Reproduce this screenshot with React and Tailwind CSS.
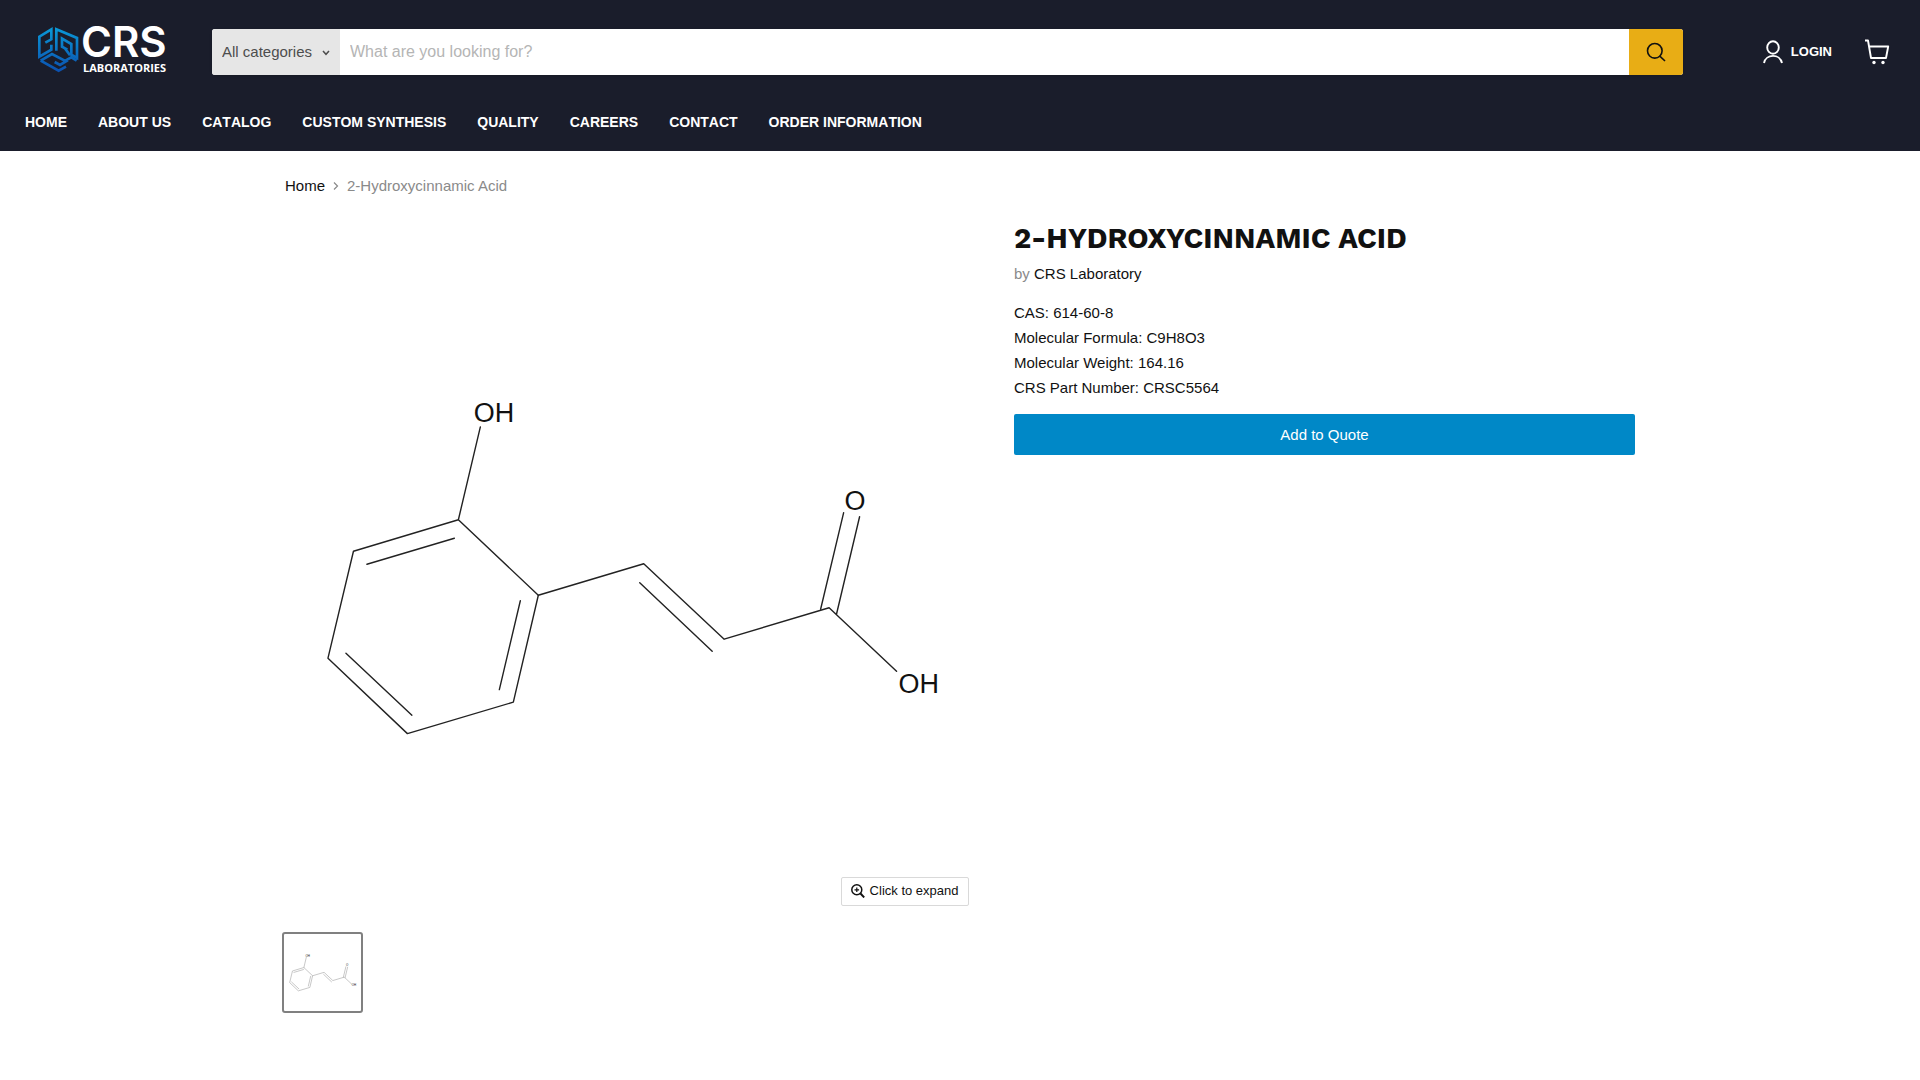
import React from "react";

const NAV = ["HOME", "ABOUT US", "CATALOG", "CUSTOM SYNTHESIS", "QUALITY", "CAREERS", "CONTACT", "ORDER INFORMATION"];

const DETAILS = [
  "CAS: 614-60-8",
  "Molecular Formula: C9H8O3",
  "Molecular Weight: 164.16",
  "CRS Part Number: CRSC5564",
];

function Logo() {
  return (
    <svg viewBox="0 0 140 60" className="h-[60px] w-[140px] overflow-visible" role="img" aria-label="CRS Laboratories">
      <defs>
        <linearGradient id="cube" x1="0" y1="15" x2="0" y2="150" gradientUnits="userSpaceOnUse">
          <stop offset="0" stopColor="#0a9ad8" />
          <stop offset="1" stopColor="#0b4fae" />
        </linearGradient>
      </defs>
      <g transform="translate(-1 0) scale(0.3333)" fill="none" stroke="url(#cube)" strokeWidth="8">
        <path d="M34 62L52 52V22L16 44V104L52 83V68" />
        <path d="M67 86V22L129 48V108L112 98V66L84 50V74L100 83M92 78L108 100" />
        <path d="M20 116L54 96L96 118L78 129L62 120M20 116L74 146L96 134M128 116L112 106L94 116" />
      </g>
      <text x="46" y="35" fill="#fff" fontFamily="Inter" fontWeight="600" fontSize="42">CRS</text>
      <text x="48" y="50" fill="#fff" fontFamily="Open Sans" fontWeight="700" fontSize="11">LABORATORIES</text>
    </svg>
  );
}

function Molecule({ className, strokeWidth = 1.4, stroke = "#222" }) {
  return (
    <svg viewBox="285 221 689 689" className={className} role="img" aria-label="2-Hydroxycinnamic Acid structure">
      <g fill="none" stroke={stroke} strokeWidth={strokeWidth} strokeLinecap="round" strokeLinejoin="round">
        <path d="M480.500 427L458.500 520L538.500 595.500L513.500 702.500L407.500 734L328 658.500L353.500 551.500L458.500 520" />
        <path d="M367 564.500L454.500 538.500M520.500 601L499.500 690M346 653.500L412 715.500" />
        <path d="M538.500 595.500L644 564L724.500 639.500L829.500 608L897 671.500M640 583L712.500 651.500" />
        <path d="M844 513L821 609.500M860 517L837 614" />
      </g>
      <g fill="#111" fontFamily="Liberation Sans" fontSize="27">
        <text x="474" y="422">OH</text>
        <text x="845" y="510">O</text>
        <text x="899" y="693">OH</text>
      </g>
    </svg>
  );
}

export default function App() {
  return (
    <div className="min-h-screen bg-white font-['Liberation_Sans',Arial,sans-serif] text-[15px] text-[#111]">
      <header className="bg-[#1a1d2b] pb-2 text-white">
        <div className="flex items-center pt-[22px] pr-[30px] pl-[35px]">
          <a href="#" className="mr-[37px] block">
            <Logo />
          </a>
          <form className="flex h-[46px] flex-1 overflow-hidden rounded-[3px] bg-white shadow" onSubmit={(e) => e.preventDefault()}>
            <div className="relative w-[128px] bg-[#e6e6e6] text-[#4d4d4d]">
              <select aria-label="Category" className="h-full w-full appearance-none pl-[10px]">
                <option>All categories</option>
              </select>
              <svg viewBox="0 0 8 6" className="pointer-events-none absolute top-[21px] right-[10px] h-[6px] w-2" fill="none" stroke="#4d4d4d" strokeWidth="1.500">
                <path d="M1 1L4 4.300L7 1" />
              </svg>
            </div>
            <input aria-label="Search" placeholder="What are you looking for?" className="min-w-0 flex-1 px-[10px] text-base text-[#111] outline-none placeholder:text-[#b5b5b5]" />
            <button aria-label="Submit search" className="flex w-[54px] items-center justify-center bg-[#e8ad15]">
              <svg viewBox="0 0 20 20" className="h-5 w-5" fill="none" stroke="#111" strokeWidth="1.600">
                <circle cx="8.800" cy="8.800" r="7.300" />
                <path d="M13.500 13.800L19 19" />
              </svg>
            </button>
          </form>
          <a href="#" className="ml-20 flex items-center gap-2 text-[13px] font-bold">
            <svg viewBox="0 0 20 24" className="h-6 w-5" fill="none" stroke="#fff" strokeWidth="1.900">
              <ellipse cx="10" cy="7.500" rx="5.800" ry="6.300" />
              <path d="M1 23C3 13.500 17 13.500 19 23" />
            </svg>
            LOGIN
          </a>
          <a href="#" aria-label="Cart" className="ml-8">
            <svg viewBox="0 0 26 26" className="h-[26px] w-[26px]" fill="none" stroke="#fff" strokeWidth="1.900" strokeLinejoin="round">
              <path d="M1 1.500H4L7 19H22L24.200 7.500H5" />
              <circle cx="10" cy="23.500" r="1.700" fill="#fff" stroke="none" />
              <circle cx="19" cy="23.500" r="1.700" fill="#fff" stroke="none" />
            </svg>
          </a>
        </div>
        <nav className="mt-[19px] flex gap-[31px] px-[25px] text-[14px] leading-[42px] font-bold [font-kerning:none]">
          {NAV.map((n) => (
            <a key={n} href="#">{n}</a>
          ))}
        </nav>
      </header>

      <main className="mx-auto max-w-[1400px] px-[25px]">
        <nav aria-label="Breadcrumb" className="flex items-center pt-[23px] leading-6">
          <a href="#">Home</a>
          <svg viewBox="0 0 6 8" className="mx-2 h-2 w-[6px]" fill="none" stroke="#8a8a8a" strokeWidth="1.200">
            <path d="M1 0.500L4.500 4L1 7.500" />
          </svg>
          <span className="text-[#8a8a8a]">2-Hydroxycinnamic Acid</span>
        </nav>

        <div className="flex items-start justify-between pt-[23px]">
          <section className="w-[51%]">
            <div className="relative">
              <Molecule className="block w-full" />
              <button className="absolute right-[5px] bottom-[4px] flex h-[29px] items-center gap-[5px] rounded-[2px] border border-[#d9d9d9] bg-white px-[9px] text-[13px]">
                <svg viewBox="0 0 14 14" className="h-[14px] w-[14px]" fill="none" stroke="#111" strokeWidth="1.500">
                  <circle cx="5.800" cy="5.800" r="5" />
                  <path d="M9.500 9.500L13.200 13.500" strokeWidth="1.900" />
                  <path d="M5.800 3.500V8.100M3.500 5.800H8.100" strokeWidth="1.200" />
                </svg>
                Click to expand
              </button>
            </div>
            <button aria-label="View image 1" className="mt-[22px] -ml-[3px] block h-[81px] w-[81px] rounded-[3px] border-2 border-[#808080] p-px">
              <Molecule className="block w-full" strokeWidth={6} stroke="#aaa" />
            </button>
          </section>

          <section className="w-[46%]">
            <h1 className="font-['Work_Sans',Inter,sans-serif] text-[29px] leading-[34px] font-bold">2-HYDROXYCINNAMIC ACID</h1>
            <p className="mt-[7px] leading-6 text-[#8a8a8a]">
              by <a href="#" className="text-[#111]">CRS Laboratory</a>
            </p>
            <div className="mt-[14px] leading-[25px]">
              {DETAILS.map((d) => (
                <p key={d}>{d}</p>
              ))}
            </div>
            <button className="mt-[14px] block h-[41px] w-full rounded-[2px] bg-[#0088c7] pt-0.5 text-white">Add to Quote</button>
          </section>
        </div>
      </main>
    </div>
  );
}
